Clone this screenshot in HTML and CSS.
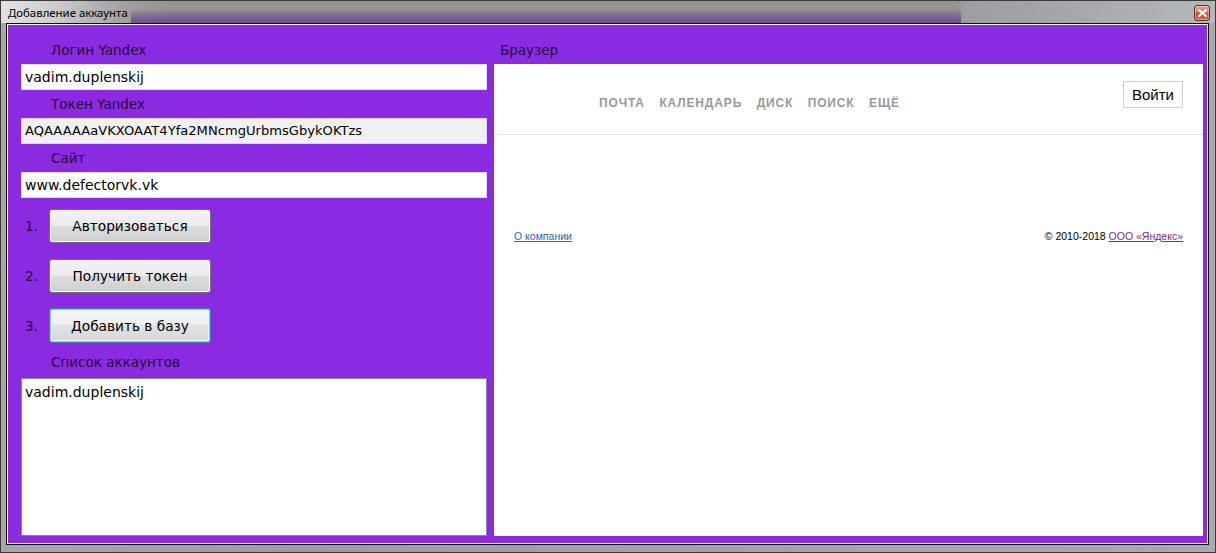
FILE: index.html
```html
<!DOCTYPE html>
<html lang="ru">
<head>
<meta charset="utf-8">
<title>Добавление аккаунта</title>
<link rel="stylesheet" href="styles.css">
</head>
<body>
<div class="window">
  <div class="titlebar">
    <span class="title">Добавление аккаунта</span>
    <span class="close-btn">
      <svg width="9" height="8" viewBox="0 0 9 8"><path d="M1 1 L8 7 M8 1 L1 7" stroke="#fff" stroke-width="2.2" stroke-linecap="square"/></svg>
    </span>
  </div>
  <div class="frame">
    <div class="frame-inner">
      <div class="client">
        <div class="left">
          <div class="label first">Логин Yandex</div>
          <div class="textbox">vadim.duplenskij</div>
          <div class="label">Токен Yandex</div>
          <div class="textbox readonly">AQAAAAAaVKXOAAT4Yfa2MNcmgUrbmsGbykOKTzs</div>
          <div class="label">Сайт</div>
          <div class="textbox">www.defectorvk.vk</div>
          <div class="step step1"><span class="num">1.</span><span class="btn">Авторизоваться</span></div>
          <div class="step step2"><span class="num">2.</span><span class="btn">Получить токен</span></div>
          <div class="step step3"><span class="num">3.</span><span class="btn focused">Добавить в базу</span></div>
          <div class="label list-label">Список аккаунтов</div>
          <div class="listbox"><div class="item">vadim.duplenskij</div></div>
        </div>
        <div class="right">
          <div class="label browser-label">Браузер</div>
          <div class="browser">
            <div class="ya-header">
              <nav class="ya-nav">
                <a>Почта</a><a>Календарь</a><a>Диск</a><a>Поиск</a><a>Ещё</a>
              </nav>
              <span class="ya-login">Войти</span>
            </div>
            <div class="ya-footer">
              <a class="ya-link">О компании</a>
              <span class="ya-copy">© 2010-2018 <a class="ya-visited">ООО «Яндекс»</a></span>
            </div>
          </div>
        </div>
      </div>
    </div>
  </div>
</div>
</body>
</html>
```
FILE: styles.css
```css
html, body {
  margin: 0;
  padding: 0;
  background: #9a9a9a;
}
.window {
  width: 1216px;
  height: 553px;
  box-sizing: border-box;
  border: 1px solid #3a3a3a;
  background: linear-gradient(to right, #a8a8a8 0, #9c9c9c 300px, #a3a3a3 700px, #a8aaac 1216px);
  display: flex;
  flex-direction: column;
  overflow: hidden;
}
.titlebar {
  height: 22px;
  flex: none;
  display: flex;
  align-items: center;
  padding-left: 7px;
  padding-right: 5px;
  background:
    linear-gradient(to bottom, rgba(112,74,150,0) 0, rgba(112,74,150,0.5) 40%, rgba(108,72,144,0.95) 100%) 130px 8px / 830px 14px no-repeat,
    linear-gradient(to right, #e2e2e2 0, #cfcfcf 50px, #a2a2a2 120px, #939393 170px, #939393 955px, #9c9fa2 965px, #a3a6a9 1050px, #b6b9bc 1216px);
}
.title {
  font-family: "Noto Sans", "DejaVu Sans", sans-serif;
  font-size: 11.4px;
  color: #000;
  line-height: 16px;
  padding-top: 1px;
}
.close-btn {
  margin-left: auto;
  width: 16px;
  height: 16px;
  box-sizing: border-box;
  border: 1px solid #6e2a1c;
  border-radius: 3px;
  background: linear-gradient(to bottom, #e9a48d 0, #d67a5e 45%, #c04e2e 55%, #d1714f 100%);
  display: flex;
  align-items: center;
  justify-content: center;
  margin-top: 2px;
  box-shadow: inset 0 0 0 1px rgba(255,255,255,0.35);
}
.frame {
  flex: 1;
  margin: 0 6px 7px 5px;
  border: 1px solid #101010;
  display: flex;
}
.frame-inner {
  flex: 1;
  border: 1px solid #f4f4f4;
  display: flex;
}
.client {
  flex: 1;
  background: #8a2be2;
  display: flex;
  padding: 0 4px 0 13px;
  gap: 7px;
}
.left {
  width: 466px;
  display: flex;
  flex-direction: column;
}
.right {
  flex: 1;
  display: flex;
  flex-direction: column;
}
.label {
  font-family: "DejaVu Sans", sans-serif;
  font-size: 13.5px;
  color: #24083c;
  height: 28px;
  line-height: 28px;
  padding-left: 30px;
}
.label.first {
  margin-top: 11px;
}
.browser-label {
  margin-top: 11px;
  padding-left: 6px;
}
.textbox {
  height: 26px;
  box-sizing: border-box;
  background: #fff;
  border: 1px solid #e0e0e0;
  font-family: "DejaVu Sans", sans-serif;
  font-size: 14px;
  line-height: 24px;
  padding-left: 3px;
  color: #000;
  white-space: nowrap;
}
.textbox.readonly {
  background: #f0f0f0;
  border-color: #d8d8d8;
  font-size: 13.1px;
}
.step {
  display: flex;
  align-items: center;
  height: 34px;
}
.step1 { margin-top: 11px; }
.step2 { margin-top: 16px; }
.step3 { margin-top: 15px; height: 35px; }
.num {
  width: 28px;
  flex: none;
  padding-left: 4px;
  box-sizing: border-box;
  font-family: "DejaVu Sans", sans-serif;
  font-size: 13.5px;
  color: #24083c;
}
.btn {
  width: 162px;
  height: 100%;
  box-sizing: border-box;
  border: 1px solid #707070;
  border-radius: 3px;
  background: linear-gradient(to bottom, #f2f2f2 0, #ebebeb 50%, #dddddd 50%, #cfcfcf 100%);
  box-shadow: inset 0 0 0 1px #fcfcfc;
  display: flex;
  align-items: center;
  justify-content: center;
  font-family: "DejaVu Sans", sans-serif;
  font-size: 13.7px;
  color: #000;
}
.btn.focused {
  border-color: #3c7fb1;
  box-shadow: inset 0 0 0 1px #7fd0f5, inset 0 0 0 2px #e4f4fc;
  background: linear-gradient(to bottom, #f6f6f6 0, #efefef 50%, #e2e2e2 50%, #d8d8d8 100%);
}
.list-label {
  margin-top: 4px;
  height: 31px;
  line-height: 31px;
}
.listbox {
  height: 158px;
  box-sizing: border-box;
  border: 1px solid #828790;
  background: #fff;
  padding: 3px 3px;
}
.item {
  font-family: "DejaVu Sans", sans-serif;
  font-size: 14px;
  line-height: 20px;
  color: #000;
}
.browser {
  height: 472px;
  background: #fff;
  display: flex;
  flex-direction: column;
}
.ya-header {
  height: 70px;
  border-bottom: 1px solid #e6e6e6;
  display: flex;
  align-items: flex-start;
  padding: 0 20px 0 105px;
}
.ya-nav {
  display: flex;
  gap: 14.5px;
  margin-top: 32px;
  font-family: "Liberation Sans", Arial, sans-serif;
  font-size: 12px;
  font-weight: bold;
  letter-spacing: 0.85px;
  text-transform: uppercase;
  color: #999;
  line-height: 14px;
}
.ya-login {
  margin-left: auto;
  margin-top: 17px;
  width: 60px;
  height: 27px;
  box-sizing: border-box;
  border: 1px solid #d0d0d0;
  display: flex;
  align-items: center;
  justify-content: center;
  font-family: "Liberation Sans", Arial, sans-serif;
  font-size: 15px;
  color: #000;
}
.ya-footer {
  display: flex;
  justify-content: space-between;
  padding: 94px 20px 0 20px;
  font-family: "Liberation Sans", Arial, sans-serif;
  font-size: 10.5px;
  line-height: 14px;
  color: #000;
}
.ya-link {
  color: #2a65b8;
  text-decoration: underline;
}
.ya-visited {
  color: #7a2a8c;
  text-decoration: underline;
}
```
